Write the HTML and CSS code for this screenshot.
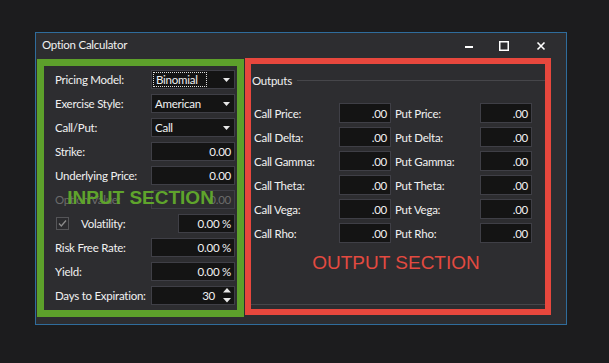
FILE: index.html
```html
<html>
  <head>
    <link rel="stylesheet" href="styles.css">
  </head>

  <body>
    <div class="window">
      <div class="titlebar">
        <span class="title">Option Calculator</span>
        <div class="controls">
          <svg width="10" height="10" viewBox="0 0 10 10"><rect x="1" y="5" width="8" height="2" fill="#fff"/></svg>
          <svg width="10" height="10" viewBox="0 0 10 10"><rect x="0.75" y="0.75" width="8.5" height="8.5" fill="none" stroke="#fff" stroke-width="1.5"/></svg>
          <svg class="close" width="10" height="10" viewBox="0 0 10 10"><path d="M1.5 1.5L8.5 8.5M8.5 1.5L1.5 8.5" stroke="#fff" stroke-width="1.6"/></svg>
        </div>
      </div>

      <div class="content">
        <section class="inputs">
          <div class="row">
            <label>Pricing Model:</label>
            <div class="field select">
              <span class="focus-ring">Binomial</span>
              <svg width="7" height="4" viewBox="0 0 7 4"><path d="M0 0H7L3.5 4Z" fill="#e8e8e8"/></svg>
            </div>
          </div>
          <div class="row">
            <label>Exercise Style:</label>
            <div class="field select">
              <span class="value">American</span>
              <svg width="7" height="4" viewBox="0 0 7 4"><path d="M0 0H7L3.5 4Z" fill="#e8e8e8"/></svg>
            </div>
          </div>
          <div class="row">
            <label>Call/Put:</label>
            <div class="field select">
              <span class="value">Call</span>
              <svg width="7" height="4" viewBox="0 0 7 4"><path d="M0 0H7L3.5 4Z" fill="#e8e8e8"/></svg>
            </div>
          </div>
          <div class="row">
            <label>Strike:</label>
            <div class="field">0.00</div>
          </div>
          <div class="row">
            <label>Underlying Price:</label>
            <div class="field">0.00</div>
          </div>
          <div class="row disabled">
            <label>Option Value:</label>
            <div class="field">0.00</div>
          </div>
          <div class="row">
            <span class="check">
              <svg width="13" height="13" viewBox="0 0 13 13"><path d="M3 6.5L5.3 9L10 3.5" fill="none" stroke="#8c8c8c" stroke-width="1.3"/></svg>
            </span>
            <label class="check-label">Volatility:</label>
            <div class="field short">0.00 %</div>
          </div>
          <div class="row">
            <label>Risk Free Rate:</label>
            <div class="field">0.00 %</div>
          </div>
          <div class="row">
            <label>Yield:</label>
            <div class="field">0.00 %</div>
          </div>
          <div class="row">
            <label>Days to Expiration:</label>
            <div class="field spin">
              <span class="value">30</span>
              <svg width="8" height="15" viewBox="0 0 8 15"><path d="M4 0L8 4.5H0ZM0 10H8L4 14.5Z" fill="#e8e8e8"/></svg>
            </div>
          </div>

          <div class="note input-note">INPUT SECTION</div>
        </section>

        <section class="outputs">
          <div class="legend">
            <span>Outputs</span>
            <span class="rule"></span>
          </div>

          <div class="out-rows">
            <div class="out-row">
              <label>Call Price:</label><div class="field">.00</div>
              <label class="put">Put Price:</label><div class="field">.00</div>
            </div>
            <div class="out-row">
              <label>Call Delta:</label><div class="field">.00</div>
              <label class="put">Put Delta:</label><div class="field">.00</div>
            </div>
            <div class="out-row">
              <label>Call Gamma:</label><div class="field">.00</div>
              <label class="put">Put Gamma:</label><div class="field">.00</div>
            </div>
            <div class="out-row">
              <label>Call Theta:</label><div class="field">.00</div>
              <label class="put">Put Theta:</label><div class="field">.00</div>
            </div>
            <div class="out-row">
              <label>Call Vega:</label><div class="field">.00</div>
              <label class="put">Put Vega:</label><div class="field">.00</div>
            </div>
            <div class="out-row">
              <label>Call Rho:</label><div class="field">.00</div>
              <label class="put">Put Rho:</label><div class="field">.00</div>
            </div>
          </div>

          <div class="note output-note">OUTPUT SECTION</div>
          <div class="group-bottom"></div>
        </section>
      </div>
    </div>
  </body>
</html>
```

FILE: styles.css
```css
body {
  margin: 0;
  background: #1c1c1e;
  font-family: Lato, "Liberation Sans", sans-serif;
  font-size: 11.5px;
  letter-spacing: -0.25px;
  color: #f1f1f1;
}

label {
  white-space: nowrap;
}

.window {
  box-sizing: border-box;
  width: 532px;
  height: 293px;
  margin: 32px 0 0 35px;
  border: 1px solid #2f6c9c;
  background: #2d2d30;
  display: flex;
  flex-direction: column;
}

.titlebar {
  height: 25px;
  display: flex;
  align-items: center;
  padding-left: 6px;
}

.title {
  flex: 1;
  margin-top: -2px;
}

.controls {
  display: flex;
  align-items: center;
  gap: 25px;
  padding-right: 20px;
}

.controls .close {
  margin-left: 2px;
}

.content {
  display: flex;
  align-items: flex-start;
  gap: 1px;
  padding-left: 1px;
}

/* left panel */
.inputs {
  position: relative;
  box-sizing: border-box;
  width: 207px;
  height: 258px;
  margin-top: 1px;
  border: 7px solid #5da02b;
  padding: 4px 2px 0 11px;
  display: flex;
  flex-direction: column;
  gap: 5px;
}

.row {
  height: 19px;
  display: flex;
  align-items: center;
}

.row label {
  flex: 1;
  min-width: 0;
}

.field {
  box-sizing: border-box;
  flex-shrink: 0;
  width: 84px;
  height: 19px;
  border: 1px solid #3f3f46;
  background: #141414;
  display: flex;
  align-items: center;
  justify-content: flex-end;
  padding-right: 3px;
}

.field.short {
  width: 57px;
}

.select {
  justify-content: space-between;
  padding: 0 4px 0 1px;
}

.select .value {
  padding-left: 2px;
}

.focus-ring {
  flex: 1;
  align-self: stretch;
  margin: 1px 16px 1px 0;
  border: 1px dotted #dcdcdc;
  padding-left: 2px;
  display: flex;
  align-items: center;
}

.spin {
  padding-right: 3px;
}

.spin .value {
  margin-right: 8px;
}

.disabled label,
.disabled .field {
  color: #6b6b6b;
}

.disabled .field {
  background: #2d2d30;
}

.check {
  box-sizing: border-box;
  flex-shrink: 0;
  width: 13px;
  height: 13px;
  margin-left: 1px;
  margin-right: 12px;
  border: 1px solid #555558;
  background: #2b2b2e;
  display: flex;
  align-items: center;
  justify-content: center;
}

.check svg {
  margin: -1px;
}

.note {
  font-family: "Liberation Sans", Arial, sans-serif;
  font-size: 19px;
  line-height: 22px;
  letter-spacing: 0;
  text-align: center;
}

.input-note {
  position: absolute;
  left: 0;
  right: 0;
  top: 121px;
  font-weight: bold;
  color: #5fa42c;
}

/* right panel */
.outputs {
  box-sizing: border-box;
  width: 306px;
  height: 257px;
  border: 6px solid #e7473d;
  padding: 8px 0 0 1px;
}

.legend {
  height: 16px;
  display: flex;
  align-items: center;
  gap: 5px;
}

.legend .rule {
  flex: 1;
  height: 1px;
  background: #46464a;
}

.out-rows {
  margin-top: 15px;
  padding-left: 2px;
  display: flex;
  flex-direction: column;
  gap: 4px;
}

.out-row {
  height: 20px;
  display: flex;
  align-items: center;
}

.out-row label {
  width: 85px;
}

.out-row .put {
  margin-left: 4px;
}

.out-row .field {
  width: 52px;
  height: 20px;
}

.output-note {
  margin-top: 9px;
  padding-right: 5px;
  color: #e34a40;
}

.group-bottom {
  margin-top: 30px;
  margin-left: -1px;
  height: 1px;
  background: #46464a;
}
```
